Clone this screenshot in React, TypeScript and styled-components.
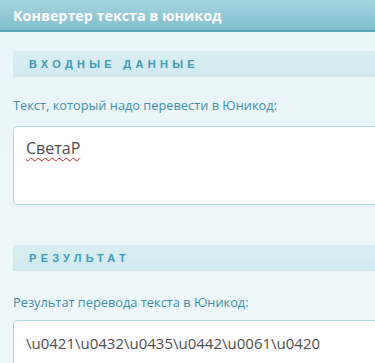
import React from 'react';
import styled, { createGlobalStyle } from 'styled-components';

const GlobalStyle = createGlobalStyle`
  html, body {
    margin: 0;
    padding: 0;
    overflow: hidden;
  }
  body {
    font-family: "Open Sans", "Noto Sans", sans-serif;
    background: #ecf6f9;
  }
`;

const Page = styled.div`
  width: 375px;
  height: 363px;
  overflow: hidden;
  background: linear-gradient(#e9f5f9, #eef7f9);
`;

const Header = styled.div`
  height: 30px;
  padding-left: 13px;
  display: flex;
  align-items: center;
  background: linear-gradient(#a4d3df, #80bfce);
  border-bottom: 2px solid #5aa6b7;
`;

const HeaderTitle = styled.h1`
  margin: 0;
  font-size: 14.3px;
  font-weight: 700;
  color: #ffffff;
`;

const Content = styled.div`
  padding: 19px 0 0 13px;
  display: flex;
  flex-direction: column;
`;

const SectionBar = styled.div<{ $mt?: number }>`
  margin-top: ${(p) => p.$mt ?? 0}px;
  margin-right: -20px;
  height: 26px;
  padding-left: 16px;
  display: flex;
  align-items: center;
  background: linear-gradient(#d8eef3 0%, #d3ebf0 80%, #cfe5ea 100%);
  font-family: "Liberation Sans", Arial, sans-serif;
  font-size: 11px;
  font-weight: 700;
  letter-spacing: 4.3px;
  color: #3b9ab5;
`;

const Label = styled.div<{ $mt?: number }>`
  margin-top: ${(p) => p.$mt ?? 20}px;
  font-size: 12.8px;
  color: #3c90a6;
  line-height: 16px;
`;

const Field = styled.div<{ $gap: number; $size: number; $pt: number }>`
  margin-top: ${(p) => p.$gap}px;
  margin-right: -20px;
  height: 79px;
  box-sizing: border-box;
  padding: ${(p) => p.$pt}px 12px 0;
  background: #ffffff;
  border: 1px solid #a9d8e1;
  border-radius: 4px;
  font-size: ${(p) => p.$size}px;
  line-height: 24px;
  color: #4d4d4d;
  white-space: nowrap;
`;

const Misspelled = styled.span`
  text-decoration: underline wavy #c0262b;
  text-decoration-skip-ink: none;
  text-underline-offset: 3px;
  text-decoration-thickness: 1px;
`;

export default function App() {
  return (
    <Page>
      <GlobalStyle />
      <Header>
        <HeaderTitle>Конвертер текста в юникод</HeaderTitle>
      </Header>
      <Content>
        <SectionBar>ВХОДНЫЕ ДАННЫЕ</SectionBar>
        <Label>Текст, который надо перевести в Юникод:</Label>
        <Field $gap={13} $size={16} $pt={9}>
          <Misspelled>СветаР</Misspelled>
        </Field>
        <SectionBar $mt={40}>РЕЗУЛЬТАТ</SectionBar>
        <Label $mt={23}>Результат перевода текста в Юникод:</Label>
        <Field $gap={10} $size={15} $pt={10}>
          {'\\u0421\\u0432\\u0435\\u0442\\u0061\\u0420'}
        </Field>
      </Content>
    </Page>
  );
}
